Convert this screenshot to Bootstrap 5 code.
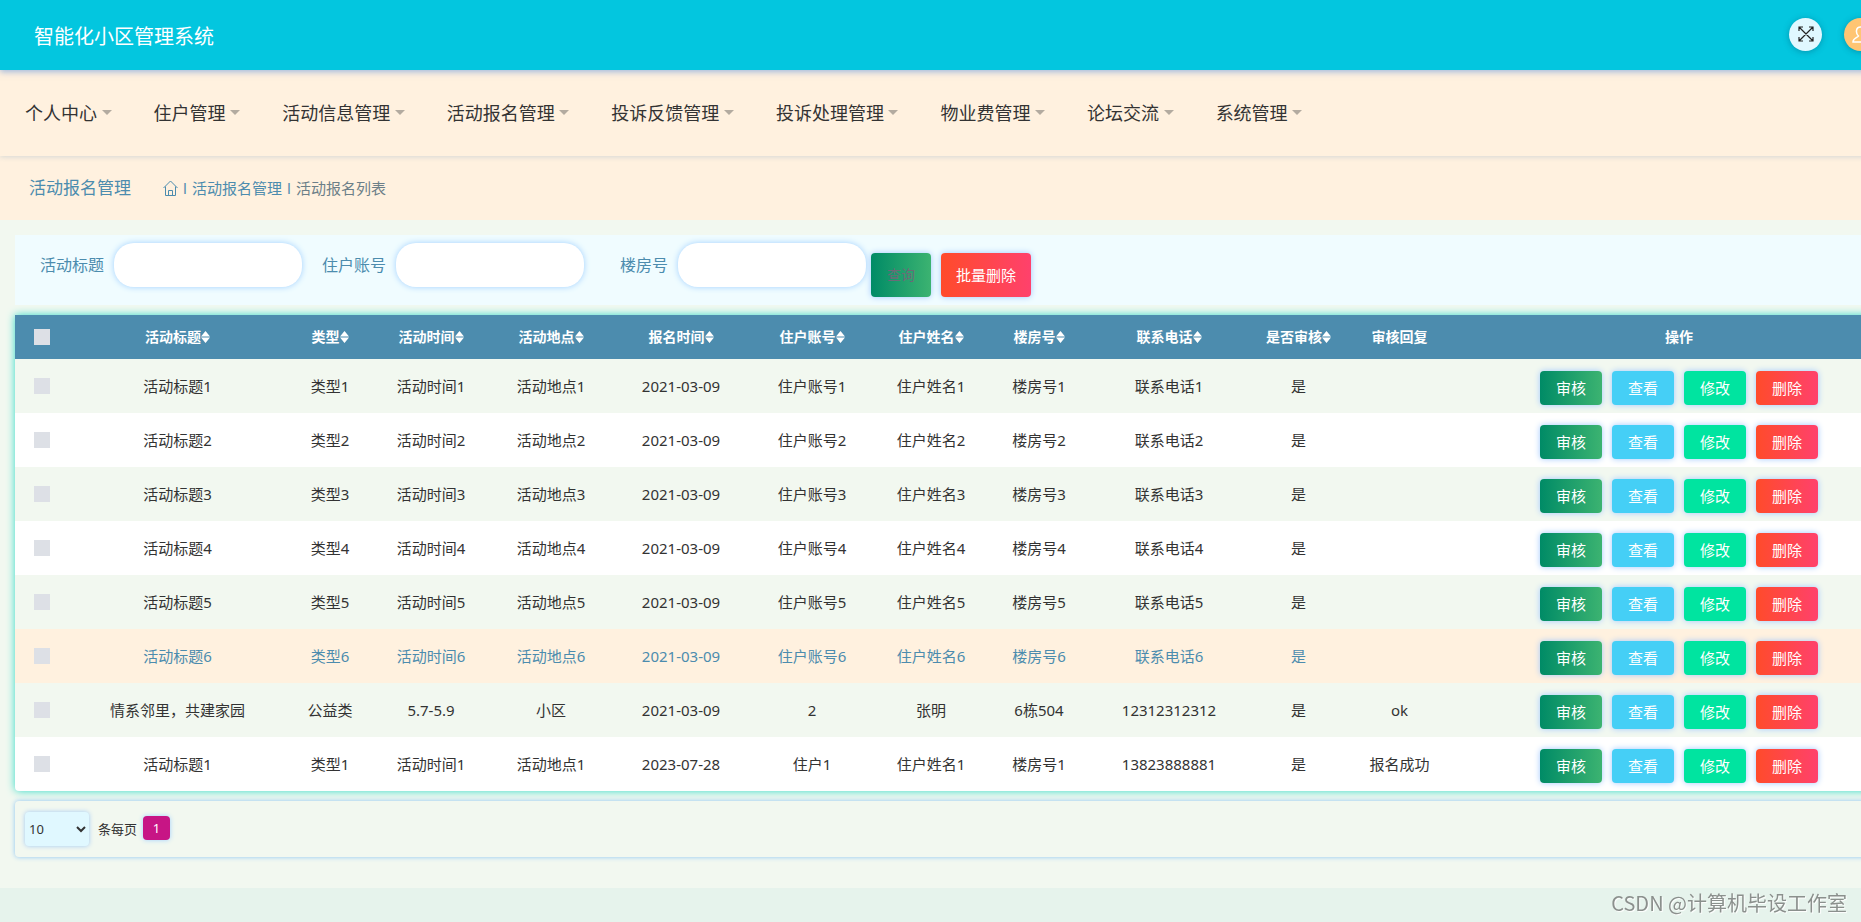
<!DOCTYPE html>
<html lang="zh-CN">
<head>
<meta charset="utf-8">
<meta name="viewport" content="width=device-width, initial-scale=1">
<title>智能化小区管理系统</title>
<link rel="stylesheet" href="https://cdn.jsdelivr.net/npm/bootstrap@5.3.0/dist/css/bootstrap.min.css">
<style>
  :root { --steel: #4c8cae; --cream: #fff1df; --mint: #f2f8f0; --green: linear-gradient(90deg, #008b66, #3cb371); --red: linear-gradient(90deg, #ff4b2b, #ff416c); }
  body { font-family: "Noto Sans", "Noto Sans CJK SC", sans-serif; font-size: 15px; line-height: 20px; color: #333; background: #e6f3ec; overflow-x: hidden; }
  .shell { width: calc(100% + 62px); background: var(--mint); }
  .topbar { height: 70px; padding: 0 46px 0 34px; background: #03c6df; box-shadow: 0 2px 6px rgba(70, 130, 220, .5); position: relative; z-index: 3; }
  .brand { font-size: 20px; line-height: 24px; color: #fff; text-decoration: none; padding-top: 4px; }
  .round-tools { gap: 22px; padding-bottom: 2px; }
  .round-btn { width: 33px; height: 33px; border: 0; padding: 0; border-radius: 50%; background: #e0f8ff; color: #222; box-shadow: 0 1px 6px rgba(0, 60, 90, .35); }
  .round-btn.user { background: #ffc573; color: #fff; }
  .menubar { height: 86px; padding: 0 25px; gap: 42px; background: var(--cream); box-shadow: 0 1px 5px rgba(70, 130, 180, .22); position: relative; z-index: 2; }
  .menubar a { font-size: 18px; line-height: 24px; color: #333; text-decoration: none; }
  .menubar a::after { color: #b3aba0; }
  .crumbs { height: 64px; padding: 0 29px; background: var(--cream); color: #6c7f88; }
  .crumbs h1 { font-size: 17px; line-height: 24px; margin: 0 32px 0 0; font-weight: 400; color: var(--steel); }
  .crumbs a { color: var(--steel); text-decoration: none; }
  .crumbs .sep { width: 14px; text-align: center; color: var(--steel); }
  .content-area { padding: 15px 0 31px 15px; }
  .search { height: 70px; padding: 8px 25px 0; background: #f0fcff; }
  .search label { width: 64px; text-align: right; font-size: 16px; color: var(--steel); margin-right: 10px; }
  .search input { width: 188px; height: 44px; border: 0; border-radius: 20px; background: #fff; box-shadow: 0 0 6px #a0d0ff; padding: 0 16px; }
  .search .field { margin-right: 20px; }
  .search .field:last-of-type { margin-right: 5px; }
  .tool { height: 44px; border: 0; border-radius: 4px; padding: 0 15px; color: #fff; margin: 10px 10px 0 0; box-shadow: 0 0 6px #a0c8ff; }
  .tool.query { background: var(--green); color: #6b6b78; font-size: 14px; padding: 0 16px; }
  .tool.remove { background: var(--red); }
  .records { table-layout: fixed; width: 100%; margin: 10px 0; text-align: center; white-space: nowrap; border-collapse: collapse; background: #fff; border-radius: 0 0 4px 4px; box-shadow: 0 0 8px #2edcc8; }
  .records th { height: 44px; padding: 0; background: var(--steel); color: #fff; font-size: 14px; }
  .records td { height: 54px; padding: 0; }
  .records tbody tr:nth-child(odd) { background: var(--mint); }
  .records tbody tr.current { background: var(--cream); color: var(--steel); }
  .records .pick { text-align: left; padding-left: 19px; }
  .records input { appearance: none; display: block; width: 16px; height: 16px; margin: 0; background: #dde0e6; }
  .sorter { width: 9px; height: 12px; fill: currentColor; vertical-align: -1px; }
  .act { width: 62px; height: 34px; border: 0; padding: 0; border-radius: 4px; margin: 4px 5px 0; color: #fff; box-shadow: 0 0 6px #a0c8ff; }
  .act.audit { background: var(--green); }
  .act.view { background: #45cff6; }
  .act.edit { background: #00e4a0; }
  .act.del { background: var(--red); }
  .pager { height: 56px; padding: 0 10px; border-radius: 4px; box-shadow: 0 0 5px #8cc4f4; font-size: 13px; background: var(--mint); }
  .pager select { width: 64px; height: 34px; border: 0; border-radius: 4px; padding: 0; background: #e0f8ff; color: #333; box-shadow: 0 0 5px #a0c8f4; margin-right: 9px; }
  .pager button { width: 27px; height: 24px; border: 0; border-radius: 4px; padding: 0; color: #fff; background: #c71585; box-shadow: 0 0 5px #a0d0ff; margin: 0 0 2px 6px; }
  .watermark { position: fixed; right: 14px; bottom: 5px; font-family: "Noto Sans CJK SC", sans-serif; font-size: 20px; line-height: 28px; color: #8b908d; text-shadow: 1px 1px 1px #fff; }
</style>
</head>
<body>
<div class="shell">
  <header class="topbar d-flex align-items-center">
    <a class="brand me-auto" href="#">智能化小区管理系统</a>
    <div class="round-tools d-flex">
      <button class="round-btn d-flex align-items-center justify-content-center" aria-label="全屏">
        <svg width="16" height="16" viewBox="0 0 16 16" fill="none" stroke="currentColor" stroke-width="1.2"><path d="M1 1l14 14M15 1L1 15M1 5V1h4M11 1h4v4M15 11v4h-4M5 15H1v-4"/></svg>
      </button>
      <button class="round-btn user d-flex align-items-center justify-content-center" aria-label="用户">
        <svg width="17" height="17" viewBox="0 0 17 17" fill="none" stroke="currentColor" stroke-width="1.5"><path d="M6.500 10C3.500 7.500 3.500 1 8.500 1S13.500 7.500 10.500 10C11 11.500 16 12 16 16H1C1 12 6 11.500 6.500 10z"/></svg>
      </button>
    </div>
  </header>
  <nav class="menubar d-flex align-items-center">
    <a class="dropdown-toggle" href="#">个人中心</a>
    <a class="dropdown-toggle" href="#">住户管理</a>
    <a class="dropdown-toggle" href="#">活动信息管理</a>
    <a class="dropdown-toggle" href="#">活动报名管理</a>
    <a class="dropdown-toggle" href="#">投诉反馈管理</a>
    <a class="dropdown-toggle" href="#">投诉处理管理</a>
    <a class="dropdown-toggle" href="#">物业费管理</a>
    <a class="dropdown-toggle" href="#">论坛交流</a>
    <a class="dropdown-toggle" href="#">系统管理</a>
  </nav>
  <div class="crumbs d-flex align-items-center">
    <h1>活动报名管理</h1>
    <a class="d-flex" href="#" aria-label="首页"><svg width="15" height="16" viewBox="0 0 15 16" fill="none" stroke="currentColor"><path d="M.5 8L7.500 1l7 7M2.500 6.500v9h10v-9M5.500 15.500v-5h4v5"/></svg></a>
    <span class="sep">l</span><a href="#">活动报名管理</a><span class="sep">l</span><span>活动报名列表</span>
  </div>
  <main class="content-area">
    <form class="search d-flex align-items-start" onsubmit="return false">
      <div class="field d-flex align-items-center"><label for="f1">活动标题</label><input id="f1" type="text"></div>
      <div class="field d-flex align-items-center"><label for="f2">住户账号</label><input id="f2" type="text"></div>
      <div class="field d-flex align-items-center"><label for="f3">楼房号</label><input id="f3" type="text"></div>
      <button class="tool query">查询</button>
      <button class="tool remove" type="button">批量删除</button>
    </form>
    <table class="records">
      <colgroup><col width="67"><col width="191"><col width="114"><col width="88"><col width="152"><col width="108"><col width="154"><col width="84"><col width="132"><col width="128"><col width="131"><col width="71"><col></colgroup>
      <thead><tr id="head"></tr></thead>
      <tbody id="rows"></tbody>
    </table>
    <div class="pager d-flex align-items-center">
      <select id="size" aria-label="每页条数"><option>10</option><option>25</option><option>50</option></select>
      <label for="size">条每页</label>
      <button>1</button>
    </div>
  </main>
</div>
<div class="watermark">CSDN @计算机毕设工作室</div>
<script>
  const heads = ['活动标题', '类型', '活动时间', '活动地点', '报名时间', '住户账号', '住户姓名', '楼房号', '联系电话', '是否审核'];
  const sorter = '<svg class="sorter" viewBox="0 0 9 12"><path d="M0 5.500L4.500 0 9 5.500zM0 6.500h9L4.500 12z"/></svg>';
  document.getElementById('head').innerHTML =
    '<th class="pick"><input type="checkbox" aria-label="全选"></th>' +
    heads.map(h => `<th>${h}${sorter}</th>`).join('') + '<th>审核回复</th><th>操作</th>';
  const data = [1, 2, 3, 4, 5, 6].map(n =>
    ['活动标题', '类型', '活动时间', '活动地点'].map(t => t + n)
      .concat('2021-03-09', ['住户账号', '住户姓名', '楼房号', '联系电话'].map(t => t + n), '是', ''));
  data.push(['情系邻里，共建家园', '公益类', '5.7-5.9', '小区', '2021-03-09', '2', '张明', '6栋504', '12312312312', '是', 'ok']);
  data.push(['活动标题1', '类型1', '活动时间1', '活动地点1', '2023-07-28', '住户1', '住户姓名1', '楼房号1', '13823888881', '是', '报名成功']);
  const actions = [['audit', '审核'], ['view', '查看'], ['edit', '修改'], ['del', '删除']]
    .map(([c, t]) => `<button class="act ${c}">${t}</button>`).join('');
  document.getElementById('rows').innerHTML = data.map((r, i) =>
    `<tr class="${i === 5 ? 'current' : ''}"><td class="pick"><input type="checkbox" aria-label="选择第${i + 1}行"></td>` +
    r.map(c => `<td>${c}</td>`).join('') + `<td>${actions}</td></tr>`).join('');
</script>
<script src="https://cdn.jsdelivr.net/npm/bootstrap@5.3.0/dist/js/bootstrap.bundle.min.js"></script>
</body>
</html>
